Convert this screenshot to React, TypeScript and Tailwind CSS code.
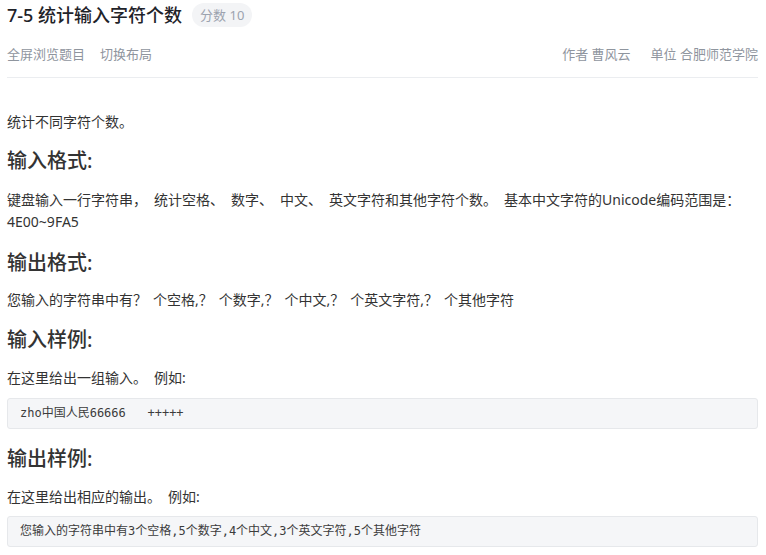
import React from "react";

const sans = "font-['Noto_Sans','Noto_Sans_CJK_SC',sans-serif]";

// full-width punctuation sits wider in the original page
function spaced(text: string) {
  return text.split("").map((ch, i) =>
    "，、。".includes(ch) ? (
      <span key={i} className="mr-[7px]">
        {ch}
      </span>
    ) : ch === "？" ? (
      <span key={i} className="mr-[6px]">
        {ch}
      </span>
    ) : (
      ch
    )
  );
}

function CodeBlock({ text, className }: { text: string; className: string }) {
  return (
    <pre
      className={`${className} whitespace-pre rounded-[3px] border border-[#e6e8eb] bg-[#f5f6f8] px-3 py-[6px] font-['DejaVu_Sans_Mono','Noto_Sans_CJK_SC',monospace] text-[12px] leading-[17px] text-[#3c3c3c]`}
    >
      {text}
    </pre>
  );
}

function Heading({ children, className }: { children: React.ReactNode; className: string }) {
  return (
    <h2 className={`${className} text-[20px] font-medium leading-[28px] text-[#333]`}>
      {children}
    </h2>
  );
}

function Para({ text, className }: { text: string; className: string }) {
  return (
    <p className={`${className} text-[14px] leading-[22px] text-[#333]`}>{spaced(text)}</p>
  );
}

export default function App() {
  return (
    <div className={`${sans} min-h-[555px] bg-white pl-[7px] pr-[8px]`}>
      <header>
        <div className="flex h-[30px] items-center gap-[10px]">
          <h1 className="text-[18px] font-medium leading-[26px] text-[#1f2329]">
            7-5 统计输入字符个数
          </h1>
          <span className="rounded-full bg-[#f3f4f6] px-[8px] text-[13px] leading-[24px] text-[#9ca3af]">
            分数 10
          </span>
        </div>
        <div className="mt-[14px] flex items-center justify-between text-[13px] leading-[20px] text-[#8f959e]">
          <div className="flex gap-[15px]">
            <span>全屏浏览题目</span>
            <span>切换布局</span>
          </div>
          <div className="flex gap-[20px]">
            <span>作者 曹风云</span>
            <span>单位 合肥师范学院</span>
          </div>
        </div>
        <div className="mt-[13px] border-b border-[#ebedf0]" />
      </header>

      <main className="pt-[20px]">
        <Para className="mt-[13px]" text="统计不同字符个数。" />

        <Heading className="mt-[14px]">输入格式:</Heading>
        <Para
          className="mt-[14px]"
          text="键盘输入一行字符串，统计空格、数字、中文、英文字符和其他字符个数。基本中文字符的Unicode编码范围是：4E00~9FA5"
        />

        <Heading className="mt-[16px]">输出格式:</Heading>
        <Para
          className="mt-[12px]"
          text="您输入的字符串中有？个空格,？个数字,？个中文,？个英文字符,？个其他字符"
        />

        <Heading className="mt-[15px]">输入样例:</Heading>
        <Para className="mt-[13px]" text="在这里给出一组输入。例如:" />
        <CodeBlock className="mt-[9px]" text={"zho中国人民66666   +++++"} />

        <Heading className="mt-[16px]">输出样例:</Heading>
        <Para className="mt-[13px]" text="在这里给出相应的输出。例如:" />
        <CodeBlock
          className="mt-[8px]"
          text={"您输入的字符串中有3个空格,5个数字,4个中文,3个英文字符,5个其他字符"}
        />
      </main>
    </div>
  );
}
